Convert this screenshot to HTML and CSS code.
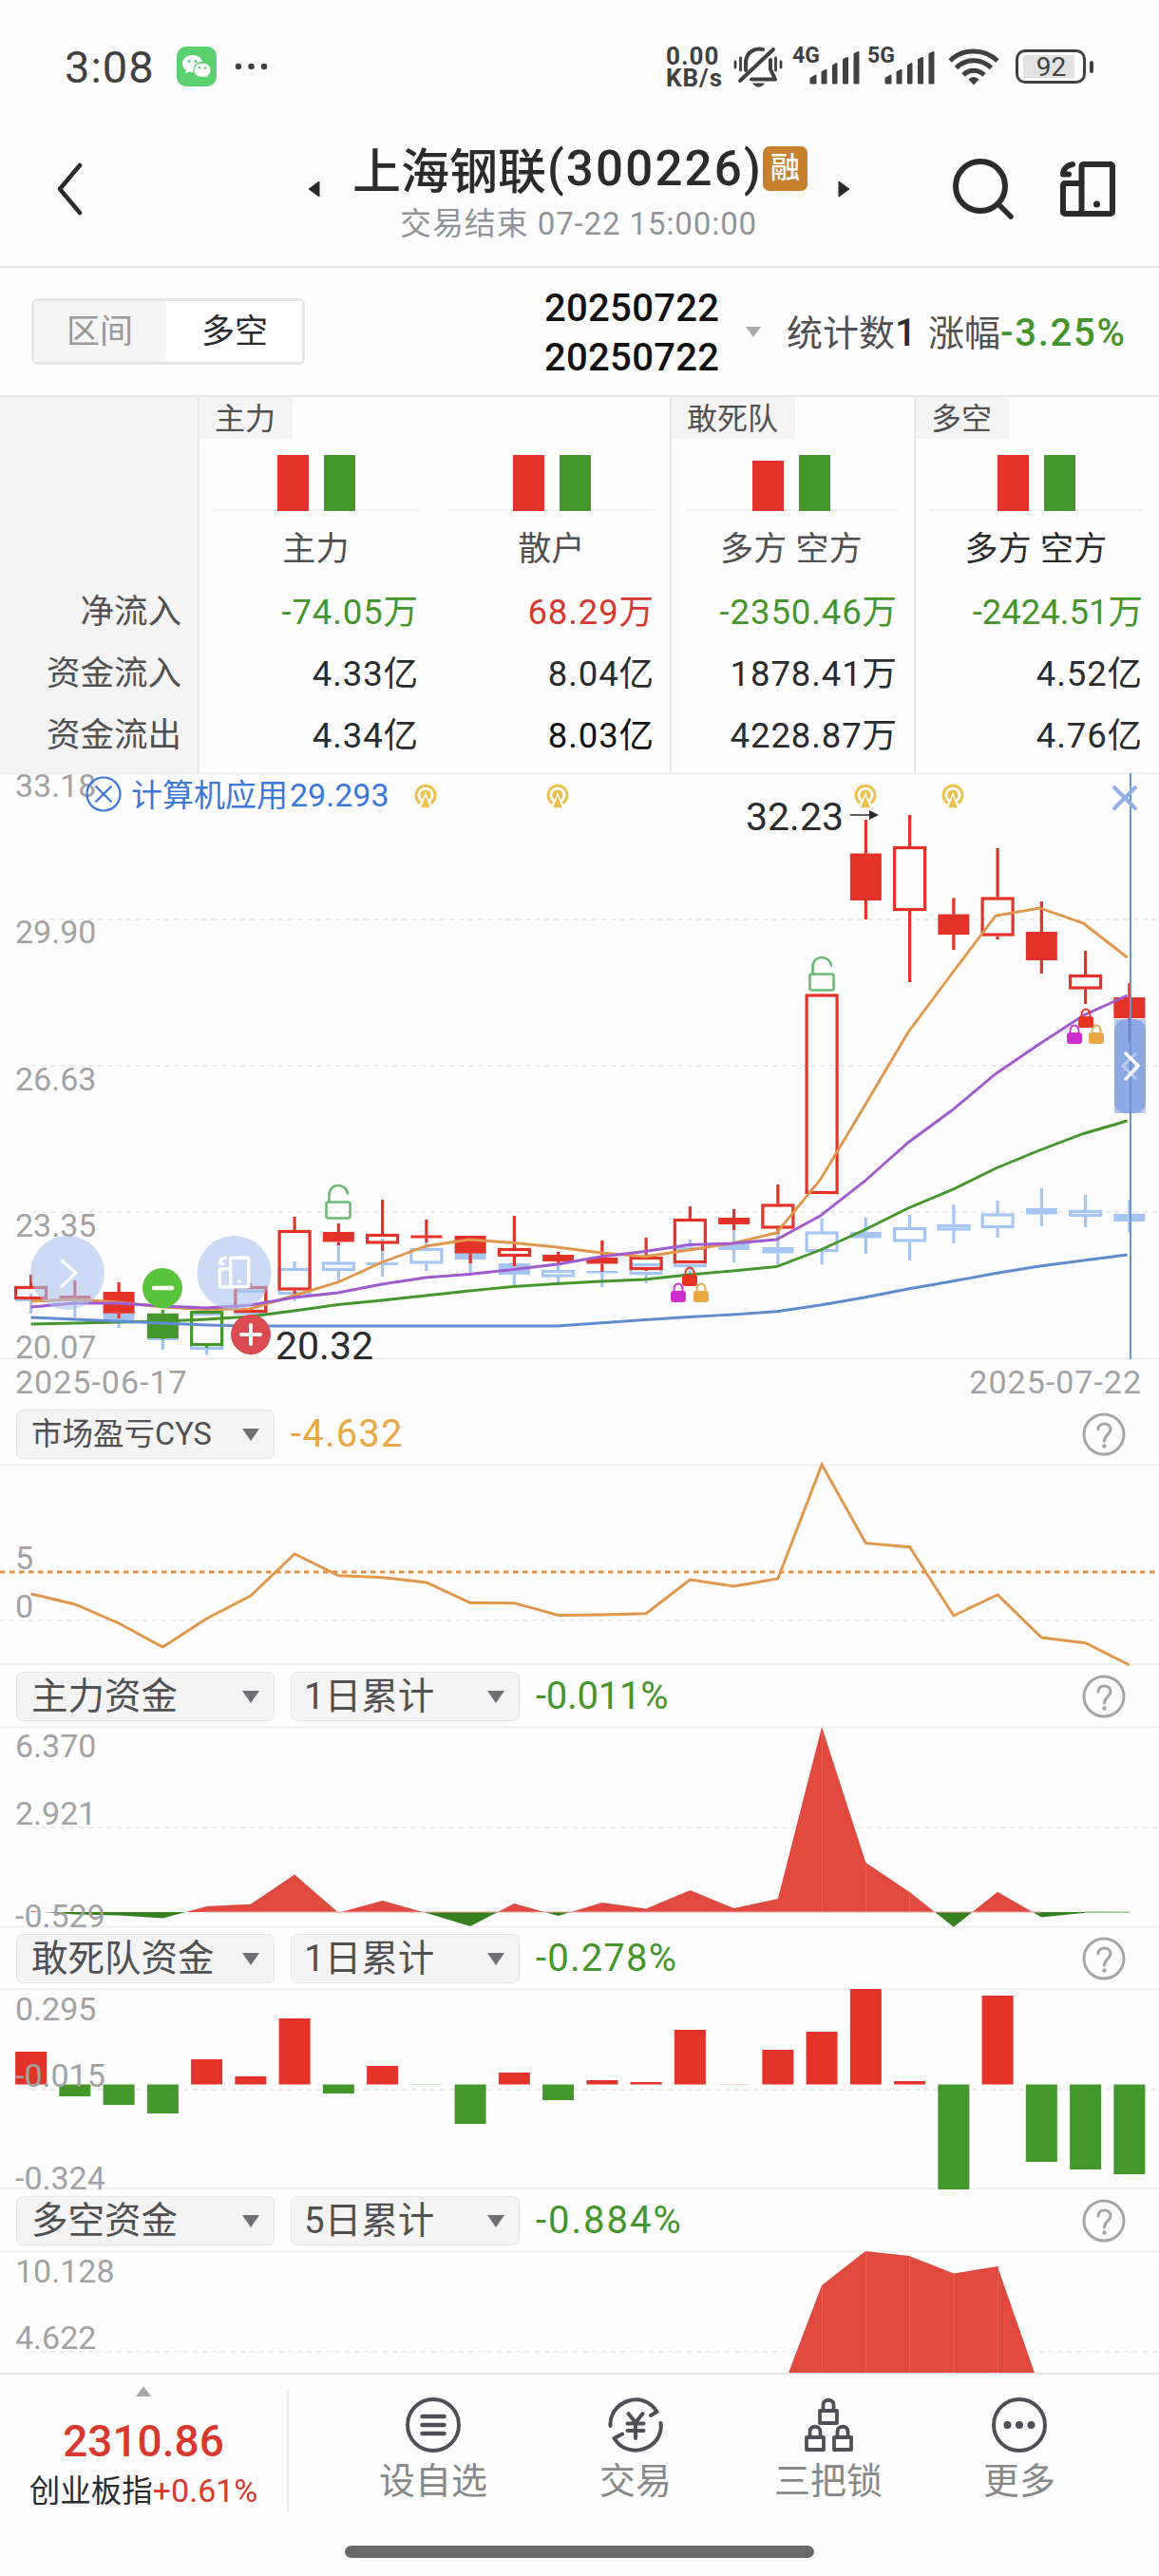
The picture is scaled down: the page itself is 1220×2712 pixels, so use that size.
FILE: index.html
```
<!DOCTYPE html>
<html lang="zh-CN">
<head>
  <meta charset="UTF-8" />
  <meta name="viewport" content="width=device-width, initial-scale=1.0" />
  <title>上海钢联(300226)</title>
  <link rel="stylesheet" href="styles.css">
</head>
<body>
  <!-- shared shapes -->
  <svg class="defs" width="0" height="0">
    <defs>
      <symbol id="switch" viewBox="0 0 60 60">
        <g fill="none" stroke="currentColor" stroke-width="6" stroke-linejoin="round" stroke-linecap="round">
          <rect x="23.5" y="4" width="32.5" height="52" rx="2" />
          <path d="M23.5 24H6a2 2 0 0 0-2 2v28a2 2 0 0 0 2 2h17.500" />
          <path d="M14 4C8 5 4 9 4 14.500h6" />
        </g>
        <circle cx="39.500" cy="46" r="3.500" fill="currentColor" />
      </symbol>
      <symbol id="antenna" viewBox="0 0 24 26">
        <path d="M6.500 20.500A10 10 0 1 1 17.500 20.500" fill="none" stroke="#ecc14e" stroke-width="3" />
        <circle cx="12" cy="12" r="5.600" fill="#ecc14e" />
        <path d="M12 11L18 26H6Z" fill="#ecc14e" stroke="#fff" stroke-width="1.500" />
      </symbol>
      <symbol id="openlock" viewBox="0 0 28 38">
        <g fill="none" stroke="#6abb73" stroke-width="2.600" stroke-linecap="round">
          <rect x="1.500" y="19.500" width="25" height="17" rx="2" />
          <path d="M4.500 19.500V12C4.500-1 22-1 24 10.500" />
        </g>
      </symbol>
      <symbol id="lock" viewBox="0 0 16 21">
        <path d="M3.500 11V7a4.500 5.500 0 0 1 9 0v4" fill="none" stroke="currentColor" stroke-width="1.800" />
        <rect x="0" y="9" width="16" height="12" rx="3" fill="currentColor" />
      </symbol>
      <symbol id="signal" viewBox="0 0 54 36">
        <path d="M1.500 34.500v-5l5-3v8zM13.500 34.500V23l4-2v13.500zM25 34.500V16l3.500-2v20.500zM36 34.500V10l4-2v26.500zM47.500 34.500V4l4-2v32.500z" fill="#404040" stroke="#404040" stroke-width="2" stroke-linejoin="round" />
      </symbol>
      <symbol id="help" viewBox="0 0 46 46">
        <circle cx="23" cy="23" r="21" fill="none" stroke="#a6a6a6" stroke-width="3" />
        <path d="M17 18c0-8 13-8 13 0 0 5-6.500 5.500-6.500 12" fill="none" stroke="#a6a6a6" stroke-width="3" stroke-linecap="round" />
        <circle cx="23.500" cy="35.500" r="2.200" fill="#a6a6a6" />
      </symbol>
    </defs>
  </svg>

  <div class="status-bar">
    <span class="clock">3:08</span>
    <svg class="wechat" viewBox="0 0 42 42">
      <rect width="42" height="42" rx="10" fill="#5ad06f" />
      <path d="M16.500 9C10.500 9 6 13 6 18c0 3 1.500 5 4 7l-1 3.500 4-2c1.500.5 3 .7 5 .5C16 20 22 15.500 27 16c-1-4.500-5.500-7-10.500-7z" fill="#fff" />
      <path d="M27 17c-5 0-9 3.500-9 8s4 7.500 9 7.500c1 0 2.200-.2 3.200-.5l3 1.700-.8-2.800C34.600 29.500 36 27.500 36 25c0-4.500-4-8-9-8z" fill="#fff" stroke="#5ad06f" />
      <g fill="#5ad06f"><circle cx="13" cy="15.500" r="1.500" /><circle cx="20" cy="15.500" r="1.500" /><circle cx="24" cy="22.500" r="1.300" /><circle cx="30" cy="22.500" r="1.300" /></g>
    </svg>
    <svg class="dots" viewBox="0 0 36 8"><g fill="#404040"><circle cx="4" cy="4" r="3.200" /><circle cx="17.500" cy="4" r="3.200" /><circle cx="31" cy="4" r="3.200" /></g></svg>
    <div class="speed">0.00<br>KB/s</div>
    <svg class="mute" viewBox="0 0 52 46">
      <g fill="none" stroke="#404040" stroke-width="4" stroke-linecap="round" stroke-linejoin="round">
        <path d="M7 37L42 4" />
        <path d="M13 26V17C14 7 22 2 31 4" />
        <path d="M39 15v10l5 10.500H19" />
        <path d="M2 17v6M7.500 13v13M44.500 13v13M50 17v6" stroke-width="2.800" />
      </g>
      <path d="M20 39.500h13c-3 5.500-10 5.500-13 0z" fill="#404040" />
    </svg>
    <span class="net">4G</span><svg class="signal"><use href="#signal" /></svg>
    <span class="net second">5G</span><svg class="signal"><use href="#signal" /></svg>
    <svg class="wifi" viewBox="0 0 54 40">
      <g fill="none" stroke="#404040" stroke-width="5">
        <path d="M2 14C16 .5 38 .5 52 14" /><path d="M8.500 21.500C19 11 35 11 45.500 21.500" /><path d="M16 29C22 22.500 32 22.500 38 29" />
      </g>
      <path d="M21.500 33.500c3.500-3.500 7.500-3.500 11 0L27 39.500z" fill="#404040" />
    </svg>
    <div class="battery"><span>92</span></div>
  </div>

  <div class="header">
    <svg class="back" viewBox="0 0 28 56"><path d="M25 3L4 28l21 25" fill="none" stroke="#2a2b2d" stroke-width="4.500" stroke-linecap="round" stroke-linejoin="round" /></svg>
    <svg class="prev" viewBox="0 0 13 18"><path d="M12 1v16L1 9z" fill="#2a2b2d" stroke="#2a2b2d" stroke-linejoin="round" /></svg>
    <div class="title">
      <h1>上海钢联<span>(300226)</span><i>融</i></h1>
      <p>交易结束 07-22 15:00:00</p>
    </div>
    <svg class="next" viewBox="0 0 13 18"><path d="M1 1v16l11-8z" fill="#2a2b2d" stroke="#2a2b2d" stroke-linejoin="round" /></svg>
    <svg class="search" viewBox="0 0 66 66"><g fill="none" stroke="#2a2b2d" stroke-width="6" stroke-linecap="round"><circle cx="30" cy="30" r="26" /><path d="M49 49l13 13" stroke-width="5.500" /></g></svg>
    <svg class="switch"><use href="#switch" /></svg>
  </div>

  <div class="toolbar">
    <div class="tabs"><span>区间</span><span class="active">多空</span></div>
    <div class="range">20250722<br>20250722</div>
    <i class="caret small"></i>
    <div class="stat">统计数<b>1</b></div>
    <div class="stat rise">涨幅<em>-3.25%</em></div>
  </div>

  <div class="funds">
    <div class="labels"><span>净流入</span><span>资金流入</span><span>资金流出</span></div>
    <div class="group main">
      <h3>主力</h3>
      <div class="col">
        <div class="bars"><i class="up"></i><i class="down"></i></div>
        <h4>主力</h4>
        <span class="green">-74.05万</span><span>4.33亿</span><span>4.34亿</span>
      </div>
      <div class="col">
        <div class="bars"><i class="up"></i><i class="down"></i></div>
        <h4>散户</h4>
        <span class="red">68.29万</span><span>8.04亿</span><span class="black">8.03亿</span>
      </div>
    </div>
    <div class="group">
      <h3>敢死队</h3>
      <div class="col">
        <div class="bars"><i class="up short"></i><i class="down"></i></div>
        <h4>多方 空方</h4>
        <span class="green">-2350.46万</span><span>1878.41万</span><span>4228.87万</span>
      </div>
    </div>
    <div class="group">
      <h3>多空</h3>
      <div class="col">
        <div class="bars"><i class="up"></i><i class="down"></i></div>
        <h4 class="dark">多方 空方</h4>
        <span class="green light">-2424.51万</span><span>4.52亿</span><span>4.76亿</span>
      </div>
    </div>
  </div>

  <svg class="kline" viewBox="0 814 1220 617">
    <g class="grid">
      <path class="edge" d="M0 814.500H1220M0 1430.500H1220" />
      <path d="M33 968H1220M33 1122H1220M33 1276H1220" />
    </g>
    <g class="axis">
      <text x="16" y="839">33.18</text><text x="16" y="993">29.90</text><text x="16" y="1148">26.63</text><text x="16" y="1302">23.35</text><text x="16" y="1430">20.07</text>
    </g>
    <g id="sectorCandles"></g>
    <g id="candles"></g>
    <g id="averages"></g>

    <g fill="none" stroke="#3a78dc" stroke-width="2.200"><circle cx="109" cy="836" r="17.500" /><path d="M100.500 827.500l17 17M117.500 827.500l-17 17" /></g>
    <text class="sector" x="138" y="849">计算机应用<tspan x="305" class="num">29.293</tspan></text>
    <use href="#antenna" x="436" y="825" width="24" height="26" /><use href="#antenna" x="575" y="825" width="24" height="26" />
    <use href="#antenna" x="899" y="825" width="24" height="26" /><use href="#antenna" x="991" y="825" width="24" height="26" />
    <text class="mark" x="785" y="874">32.23</text>
    <path d="M895 858h22" stroke="#2a2b2d" stroke-width="1.500" /><path d="M915 853l10 5-10 5z" fill="#2a2b2d" />
    <text class="mark" x="290" y="1431">20.32</text>
    <use href="#openlock" x="342" y="1246" width="28" height="38" /><use href="#openlock" x="851" y="1006" width="28" height="38" />

    <g id="locks">
      <use href="#lock" x="718" y="1333" width="16" height="21" color="#ea3323" /><use href="#lock" x="706" y="1350" width="16" height="21" color="#cc2fcf" /><use href="#lock" x="730" y="1350" width="16" height="21" color="#eba743" />
      <use href="#lock" x="1135" y="1061" width="16" height="21" color="#ea3323" /><use href="#lock" x="1123" y="1078" width="16" height="21" color="#cc2fcf" /><use href="#lock" x="1146" y="1078" width="16" height="21" color="#eba743" />
    </g>

    <g fill="#a9c0ee" fill-opacity=".58"><circle cx="71" cy="1340" r="39" /><circle cx="246.500" cy="1340" r="39" /></g>
    <path d="M65 1327l15 13-15 14" fill="none" stroke="#fff" stroke-width="3" stroke-linecap="round" />
    <use href="#switch" x="229" y="1322" width="35" height="35" color="#fff" />
    <circle cx="171" cy="1356" r="21" fill="#59c43b" /><path d="M162 1356h19" stroke="#fff" stroke-width="4.500" stroke-linecap="round" />
    <circle cx="264" cy="1405" r="21" fill="#da4b50" /><path d="M254 1405h20M264 1395v20" stroke="#fff" stroke-width="4" stroke-linecap="round" />

    <rect x="1173" y="1073" width="33" height="99" fill="#8aa9e5" fill-opacity=".6" /><rect x="1173" y="1073" width="33" height="99" rx="12" fill="#8aa9e5" />
    <path d="M1189.300 1071v27" stroke="#6b7cc8" stroke-width="3" />
    <path d="M1190 814V1431" stroke="#6794cf" stroke-width="2" />
    <path d="M1196 1109l-14 13 14 14" fill="none" stroke="#b9cdf0" stroke-width="3" />
    <path d="M1185 1109l13 13-13 14" fill="none" stroke="#fff" stroke-width="3.500" stroke-linecap="round" />
    <path d="M1173 829l22 22M1195 829l-22 22" stroke="#8fafe6" stroke-width="4" stroke-linecap="round" />
  </svg>
  <div class="dates"><span>2025-06-17</span><span>2025-07-22</span></div>

  <div class="indicator">
    <div class="select small-text">市场盈亏CYS<i class="caret"></i></div>
    <span class="value orange">-4.632</span>
    <svg class="help"><use href="#help" /></svg>
  </div>
  <svg class="panel" viewBox="0 1542 1220 211">
    <g class="grid"><path class="edge" d="M0 1542.500H1220M0 1752.500H1220" /><path d="M0 1706H1220" /></g>
    <path d="M0 1655H1220" stroke="#dd9344" stroke-width="3" stroke-dasharray="5.500 4.500" />
    <g class="axis"><text x="16" y="1652">5</text><text x="16" y="1703">0</text></g>
    <g id="cys"></g>
  </svg>

  <div class="indicator">
    <div class="select">主力资金<i class="caret"></i></div>
    <div class="select period">1日累计<i class="caret"></i></div>
    <span class="value narrow">-0.011%</span>
    <svg class="help"><use href="#help" /></svg>
  </div>
  <svg class="panel" viewBox="0 1818 1220 211">
    <clipPath id="above"><rect x="0" y="1818" width="1220" height="195" /></clipPath>
    <clipPath id="below"><rect x="0" y="2013" width="1220" height="16" /></clipPath>
    <g class="grid"><path class="edge" d="M0 1818.500H1220M0 2028.500H1220" /><path d="M33 1924H1220" /></g>
    <g id="mainForce"></g>
    <g class="axis"><text x="16" y="1850">6.370</text><text x="16" y="1921">2.921</text><text x="16" y="2029">-0.529</text></g>
  </svg>

  <div class="indicator">
    <div class="select">敢死队资金<i class="caret"></i></div>
    <div class="select period">1日累计<i class="caret"></i></div>
    <span class="value">-0.278%</span>
    <svg class="help"><use href="#help" /></svg>
  </div>
  <svg class="panel" viewBox="0 2094 1220 211">
    <g class="grid"><path class="edge" d="M0 2094.500H1220M0 2304.500H1220" /><path d="M33 2200H1220" /></g>
    <g id="squad"></g>
    <g class="axis"><text x="16" y="2127">0.295</text><text x="16" y="2197">-0.015</text><text x="16" y="2305">-0.324</text></g>
  </svg>

  <div class="indicator">
    <div class="select">多空资金<i class="caret"></i></div>
    <div class="select period">5日累计<i class="caret"></i></div>
    <span class="value wide">-0.884%</span>
    <svg class="help"><use href="#help" /></svg>
  </div>
  <svg class="panel last" viewBox="0 2370 1220 128">
    <g class="grid"><path class="edge" d="M0 2370.500H1220" /><path d="M33 2476H1220" /></g>
    <path d="M830 2498L865 2406 911 2370 957 2375 1004 2393.500 1050 2386 1089 2498z" fill="#e04a3e" />
    <path d="M865.500 2406V2498M911.500 2370V2498M957.500 2375V2498M1004 2394V2498M1050.500 2386V2498" stroke="#e66157" />
    <g class="axis"><text x="16" y="2403">10.128</text><text x="16" y="2473">4.622</text></g>
  </svg>

  <div class="footer">
    <div class="index">
      <i class="arrow-up"></i>
      <strong>2310.86</strong>
      <p>创业板指<em>+0.61%</em></p>
    </div>
    <div class="nav n1">
      <svg viewBox="0 0 60 60"><g fill="none" stroke="#4f5056" stroke-width="4" stroke-linecap="round"><circle cx="30" cy="30" r="27" /><path d="M18.500 21h23M18.500 30h23M18.500 39h23" stroke-width="4.500" /></g></svg>
      设自选
    </div>
    <div class="nav n2">
      <svg viewBox="0 0 60 60"><g fill="none" stroke="#4f5056" stroke-width="4" stroke-linecap="round" stroke-linejoin="round">
        <path d="M3.500 31C2 5 38-8 52.500 16l-6.500 4" /><path d="M56.500 28C60 55 22 68 7.500 44L16 39.500" />
        <path d="M22.500 18l7.500 9.500L37.500 18M30 27.500V44M21.500 28.500h17M21.500 36h17" />
      </g></svg>
      交易
    </div>
    <div class="nav n3">
      <svg viewBox="0 0 60 60"><g fill="none" stroke="#4f5056" stroke-width="3.800" stroke-linejoin="round">
        <path d="M21 15h18v13H21zM24.500 15V9c0-7 11-7 11 0v6M7 43h18v13H7zM10.500 43v-6c0-7 11-7 11 0v6M36 43h18v13H36zM39.500 43v-6c0-7 11-7 11 0v6" />
      </g></svg>
      三把锁
    </div>
    <div class="nav n4">
      <svg viewBox="0 0 60 60"><circle cx="30" cy="30" r="27" fill="none" stroke="#4f5056" stroke-width="4" /><g fill="#4f5056"><circle cx="17.500" cy="30" r="4" /><circle cx="30" cy="30" r="4" /><circle cx="42.500" cy="30" r="4" /></g></svg>
      更多
    </div>
  </div>
  <div class="home-bar"></div>

  <script src="script.js"></script>
</body>
</html>
```
FILE: styles.css
```
* {
  margin: 0;
  padding: 0;
  box-sizing: border-box;
}

body {
  width: 1220px;
  height: 2712px;
  overflow: hidden;
  background: #fefefe;
  color: #2a2b2d;
  font-family: Roboto, 'Noto Sans CJK SC', sans-serif;
}

svg {
  display: block;
  flex-shrink: 0;
}

i, em {
  font-style: normal;
}

.defs {
  position: absolute;
}

/* status bar */
.status-bar {
  height: 140px;
  padding-left: 68px;
  display: flex;
  align-items: center;
  color: #404040;
}

.clock {
  width: 118px;
  font-size: 47px;
  letter-spacing: 1px;
}

.wechat {
  width: 42px;
  height: 42px;
}

.dots {
  width: 36px;
  height: 8px;
  margin-left: 19px;
}

.speed {
  width: 71px;
  margin: 2px 0 0 418px;
  font-size: 26px;
  line-height: 23px;
  font-weight: 700;
  letter-spacing: 1px;
}

.mute {
  width: 52px;
  height: 46px;
  margin-top: 2px;
}

.net {
  width: 18px;
  margin: -24px 0 0 10px;
  font-size: 23px;
  font-weight: 700;
}

.net.second {
  margin-left: 7px;
}

.signal {
  width: 54px;
  height: 36px;
  margin-top: 1px;
}

.wifi {
  width: 54px;
  height: 40px;
  margin-left: 13px;
}

.battery {
  position: relative;
  width: 74px;
  height: 36px;
  margin-left: 17px;
  padding: 3px 9px 3px 5px;
  border: 3px solid #404040;
  border-radius: 10px;
}

.battery::after {
  content: '';
  position: absolute;
  right: -11px;
  top: 9px;
  width: 4px;
  height: 13px;
  border-radius: 2px;
  background: #404040;
}

.battery span {
  display: block;
  height: 24px;
  background: #e2e2e2;
  font-size: 28px;
  line-height: 25px;
  text-align: center;
  padding-left: 5px;
}

/* header */
.header {
  height: 142px;
  border-bottom: 2px solid #e6e6e6;
  display: flex;
  align-items: flex-start;
}

.back {
  width: 28px;
  height: 56px;
  margin: 31px 0 0 59px;
}

.prev {
  width: 13px;
  height: 18px;
  margin: 50px 0 0 237px;
}

.title {
  width: 545px;
  padding-left: 34px;
}

.title h1 {
  display: flex;
  align-items: center;
  height: 74px;
  font-size: 51px;
  font-weight: 500;
  white-space: nowrap;
}

.title h1 span {
  width: 228px;
  padding-left: 1px;
  letter-spacing: 2.2px;
}

.title h1 i {
  width: 47px;
  height: 47px;
  border-radius: 7px;
  background: #c8802c;
  color: #fff;
  font-size: 31px;
  line-height: 45px;
  text-align: center;
}

.title p {
  margin: 1px 0 0 50px;
  font-size: 33px;
  line-height: 42px;
  color: #929396;
  letter-spacing: 0.9px;
}

.next {
  width: 13px;
  height: 18px;
  margin-top: 50px;
}

.search {
  width: 66px;
  height: 66px;
  margin: 26px 0 0 107px;
}

.switch {
  width: 60px;
  height: 60px;
  margin: 29px 0 0 47px;
  color: #2a2b2d;
}

/* toolbar */
.toolbar {
  height: 136px;
  padding-left: 33px;
  border-bottom: 2px solid #e6e6e6;
  display: flex;
  align-items: center;
}

.tabs {
  width: 288px;
  height: 70px;
  display: flex;
  border: 3px solid #e5e5e7;
  border-radius: 7px;
  font-size: 35px;
  line-height: 65px;
  text-align: center;
}

.tabs span {
  width: 138px;
  height: 64px;
  background: #f5f5f5;
  color: #98989a;
}

.tabs .active {
  width: 144px;
  padding-left: 2px;
  background: #fff;
  color: #2a2b2d;
}

.range {
  width: 212px;
  margin: 3px 0 0 252px;
  font-size: 40px;
  line-height: 52px;
  font-weight: 500;
  letter-spacing: 0.3px;
  color: #111;
  white-space: nowrap;
}

.caret {
  border: 9px solid transparent;
  border-top: 13px solid #6f7073;
  border-bottom: 0;
}

.caret.small {
  border-width: 11px 8px 0;
  border-top-color: #ababad;
}

.stat {
  width: 150px;
  margin: -3px 0 0 27px;
  font-size: 38px;
  color: #505052;
  white-space: nowrap;
}

.stat b {
  font-weight: 500;
  color: #2a2b2d;
  font-size: 40px;
}

.stat.rise {
  margin-left: -1px;
}

.stat em {
  font-size: 40px;
  font-weight: 500;
  letter-spacing: 1.7px;
  color: #44962c;
}

/* fund flow table */
.funds {
  height: 396px;
  display: grid;
  grid-template-columns: 208px 497px 257px 258px;
}

.labels {
  display: flex;
  flex-direction: column;
  padding: 194px 17px 0 0;
  background: #f4f4f4;
  color: #505052;
  font-size: 35.5px;
  line-height: 65px;
  text-align: right;
}

.group {
  border-left: 2px solid #e8e8e8;
}

.group.main {
  display: grid;
  grid-template-columns: 248px 248px;
  grid-template-rows: 44px auto;
}

.group.main h3 {
  grid-column: span 2;
}

.group h3 {
  width: fit-content;
  height: 44px;
  padding: 0 18px 0 16px;
  background: #f4f4f4;
  color: #505052;
  font-size: 32px;
  font-weight: 400;
  line-height: 46px;
}

.col {
  display: flex;
  flex-direction: column;
  padding: 0 17px 0 14px;
  font-size: 36.5px;
  line-height: 65px;
  letter-spacing: 0.9px;
  text-align: right;
  white-space: nowrap;
}

.bars {
  height: 76px;
  display: flex;
  align-items: flex-end;
  justify-content: center;
  gap: 16px;
  border-bottom: 2px solid #f1f1f1;
}

.bars i {
  width: 33px;
  height: 59px;
  margin-bottom: -2px;
}

.bars .up {
  background: #e33228;
}

.bars .short {
  height: 53px;
}

.bars .down {
  background: #44972b;
}

.col h4 {
  height: 74px;
  color: #505052;
  font-size: 35px;
  font-weight: 400;
  line-height: 82px;
  letter-spacing: 0.3px;
  text-align: center;
}

.col h4.dark {
  color: #2a2b2d;
}

.col .black {
  color: #111;
}

.col .light {
  letter-spacing: 0;
}

.green {
  color: #44962c;
}

.red {
  color: #d8392f;
}

/* charts */
.kline {
  width: 1220px;
  height: 617px;
  overflow: visible;
}

.panel {
  width: 1220px;
  height: 211px;
  overflow: visible;
}

.panel.last {
  height: 128px;
}

.grid path {
  stroke: #ececec;
  stroke-width: 2;
  stroke-dasharray: 5 5;
}

.grid .edge {
  stroke: #efefef;
  stroke-dasharray: none;
}

.axis text {
  font-size: 34px;
  fill: #a2a2a4;
}

.sector {
  font-size: 33px;
  fill: #3a78dc;
}

.sector .num {
  font-size: 34px;
}

.mark {
  font-size: 41px;
  fill: #2a2b2d;
}

.dates {
  height: 46px;
  padding: 0 18px 0 16px;
  display: flex;
  justify-content: space-between;
  font-size: 34px;
  line-height: 48px;
  letter-spacing: 1px;
  color: #a2a2a4;
}

.indicator {
  height: 65px;
  padding: 0 35px 0 17px;
  display: flex;
  align-items: center;
}

.select {
  width: 272px;
  height: 52px;
  margin: 1px 17px 0 0;
  padding: 0 15px 0 15px;
  display: flex;
  align-items: center;
  justify-content: space-between;
  border: 1.5px solid #e5e5e5;
  border-radius: 7px;
  background: #f4f4f4;
  color: #505052;
  font-size: 38.5px;
  line-height: 50px;
}

.small-text {
  font-size: 32.5px;
}

.period {
  width: 241px;
  padding-left: 13px;
}

.value {
  font-size: 40px;
  letter-spacing: 1.2px;
  color: #44962c;
}

.value.narrow {
  letter-spacing: -0.2px;
}

.value.wide {
  letter-spacing: 2px;
}

.orange {
  color: #eba743;
}

.help {
  width: 46px;
  height: 46px;
  margin-left: auto;
}

/* bottom bar */
.footer {
  height: 182px;
  border-top: 2px solid #e6e6e6;
  display: flex;
  align-items: flex-start;
}

.index {
  width: 304px;
  height: 129px;
  margin-top: 16px;
  display: flex;
  flex-direction: column;
  align-items: center;
  border-right: 2px solid #e8e8e8;
}

.arrow-up {
  margin-top: -4px;
  border: 8px solid transparent;
  border-top: 0;
  border-bottom: 11px solid #a9a9ab;
}

.index strong {
  margin-top: 19px;
  font-size: 46px;
  line-height: 56px;
  font-weight: 500;
  color: #d8392f;
}

.index p {
  font-size: 32.5px;
  line-height: 48px;
}

.index em {
  color: #d8392f;
  font-size: 34px;
}

.nav {
  width: 140px;
  margin-top: 23px;
  font-size: 38px;
  line-height: 58px;
  color: #87888a;
  text-align: center;
}

.nav svg {
  width: 60px;
  height: 60px;
  margin: 0 auto;
}

.n1 {
  margin-left: 82px;
}

.n2 {
  margin-left: 73px;
}

.n3 {
  margin-left: 63px;
}

.n4 {
  margin-left: 61px;
}

.home-bar {
  width: 494px;
  height: 13px;
  margin: 0 auto;
  border-radius: 7px;
  background: #696969;
}
```
FILE: script.js
```
const RED = '#e33228';
const GREEN = '#44972b';
const PALE = '#a5c6f4';

// x of the n-th trading day
const dayX = i => 32.6 + i * 46.25;
const lineX = i => 32.6 + i * 46.16;

// [filled, wick top, body top, body bottom, wick bottom, color]
const candles = [
  [0, 1342, 1354, 1368, 1368], [1, 1348, 1364, 1367, 1367], [1, 1350, 1360, 1382.7, 1388],
  [1, 1379, 1382.7, 1409, 1410, GREEN], [0, 1380, 1380, 1417, 1419, GREEN], [0, 1351, 1354, 1382, 1382],
  [0, 1281, 1295, 1358.5, 1362], [1, 1288, 1297, 1307.5, 1311], [0, 1263, 1299, 1309.5, 1317],
  [1, 1284, 1300.5, 1303.5, 1308], [1, 1301, 1301, 1319.5, 1330], [0, 1280, 1314, 1323, 1333],
  [1, 1318, 1321, 1328, 1332], [1, 1306, 1324, 1330.5, 1339], [0, 1303, 1323, 1337, 1338],
  [0, 1270, 1283, 1330, 1330], [1, 1273, 1282, 1289, 1295], [0, 1247, 1267.5, 1293.5, 1299],
  [0, 1047, 1046.5, 1257, 1257], [1, 863, 898.5, 948, 968], [0, 858, 891, 959, 1034],
  [1, 945.5, 962.5, 984, 1000], [0, 893, 944.5, 985.5, 989], [1, 949, 981, 1011, 1025],
  [0, 1001, 1026, 1041.5, 1057], [1, 1035, 1050, 1072, 1073]
];

const sector = [
  [1, 1362, 1366, 1370, 1383], [1, 1366, 1366, 1367, 1387], [1, 1380, 1380, 1390, 1398],
  [1, 1400, 1400, 1411, 1421], [0, 1382, 1382, 1421, 1426], [0, 1358, 1358, 1384, 1384],
  [0, 1328, 1335, 1363, 1370], [0, 1311, 1328.5, 1338, 1349], [1, 1304, 1329, 1332, 1344],
  [0, 1308, 1314, 1330.5, 1338], [1, 1315, 1315, 1326, 1341], [1, 1330, 1330, 1342, 1354],
  [0, 1331, 1337, 1344.5, 1350], [1, 1338, 1338, 1340.5, 1355], [0, 1330, 1330, 1342, 1351],
  [0, 1305, 1313, 1334, 1342], [1, 1295, 1309, 1316, 1329], [1, 1299, 1313, 1319.5, 1331],
  [0, 1283, 1296.5, 1318, 1331], [1, 1282, 1297, 1303.5, 1320], [0, 1279, 1292, 1307.5, 1327],
  [0, 1268, 1289, 1295.5, 1309], [0, 1264, 1277.5, 1293, 1303], [1, 1251, 1272, 1278.5, 1291],
  [0, 1258, 1274, 1281, 1292], [1, 1263, 1278, 1286, 1298]
];

const averages = {
  '#44972b': [1394, 1393, 1392, 1391, 1389, 1386, 1380, 1373.5, 1369, 1364, 1359, 1354.5, 1351.5, 1349, 1347, 1342, 1338, 1333.5, 1316, 1295, 1272, 1252.7, 1230, 1211, 1193.5, 1180],
  '#5f8bd0': [1387, 1389, 1391, 1393, 1395, 1396, 1396, 1396, 1396, 1396, 1396, 1396, 1396, 1392.7, 1389.5, 1386.5, 1384, 1380.7, 1374, 1366, 1357, 1349, 1340.5, 1333, 1327, 1321],
  '#e2964a': [1370, 1368, 1371, 1376, 1378.5, 1378, 1364, 1350, 1329, 1312, 1305, 1308.5, 1313, 1319, 1323, 1316, 1309, 1298, 1242, 1165, 1087, 1025, 964, 956, 972, 1008],
  '#a15bd0': [1376, 1372, 1372, 1375, 1377, 1374, 1366, 1361, 1352, 1345, 1341.5, 1336.5, 1331, 1323, 1317.5, 1310.5, 1309, 1305, 1280, 1244, 1203, 1169, 1130.5, 1099, 1069, 1048]
};

const cys = [1678, 1689, 1709, 1734, 1704, 1680, 1636, 1658.7, 1660.7, 1666, 1687.5, 1687.7, 1700.5, 1700, 1698.7, 1663, 1670, 1662, 1542, 1624.7, 1628.7, 1701, 1679, 1724, 1729.7, 1753];

const mainForce = [2012, 2015.5, 2016.5, 2019.5, 2007, 2004.7, 1973.5, 2013.7, 2001, 2014, 2028, 2004, 2017, 2003, 2009.5, 1990, 2009, 1999, 1818, 1961, 1992, 2028.7, 1991.7, 2018.5, 2013.8, 2013.5];

const squad = [2160, 2207, 2216, 2225, 2168, 2186, 2125, 2204, 2175, 2195, 2236, 2182, 2211, 2190, 2192, 2137, 2194, 2158, 2139, 2094, 2191, 2305, 2101, 2276, 2284, 2289];

function drawCandles(id, data, base) {
  document.getElementById(id).innerHTML = data.map(([filled, top, open, close, bottom, color], i) => {
    const c = color || base;
    const x = dayX(i);
    const wick = `<path d="M${x} ${top}V${open}M${x} ${close}V${bottom}" stroke="${c}" stroke-width="3.2"/>`;
    const body = filled
      ? `<rect x="${x - 16.5}" y="${open}" width="33" height="${close - open}" fill="${c}"/>`
      : `<rect x="${x - 16}" y="${open + 1.5}" width="32" height="${close - open - 3}" fill="none" stroke="${c}" stroke-width="3.2"/>`;
    return wick + body;
  }).join('');
}

function polyline(data, color) {
  const points = data.map((y, i) => `${lineX(i)},${y}`).join(' ');
  return `<polyline points="${points}" fill="none" stroke="${color}" stroke-width="2.9"/>`;
}

drawCandles('sectorCandles', sector, PALE);
drawCandles('candles', candles, RED);

document.getElementById('averages').innerHTML =
  Object.entries(averages).map(([color, data]) => polyline(data, color)).join('');

document.getElementById('cys').innerHTML =
  `<polyline points="${cys.map((y, i) => `${dayX(i)},${y}`).join(' ')}" fill="none" stroke="#e2964a" stroke-width="2.9"/>`;

// area split at the zero line: red above, green below
const area = `M${dayX(0)} 2013L` + mainForce.map((y, i) => `${dayX(i)} ${y}`).join('L') + `L${dayX(25)} 2013Z`;
document.getElementById('mainForce').innerHTML =
  `<path d="${area}" fill="#e04a3e" clip-path="url(#above)"/>` +
  `<path d="${area}" fill="#35801f" clip-path="url(#below)"/>` +
  `<path d="M${dayX(4)} 2013H${dayX(23)}" stroke="#e9a79f"/>` +
  `<path d="M${dayX(24)} 2013H${dayX(25)}" stroke="#a5cf9c" stroke-width="1.500"/>` +
  `<path d="M865.500 1820V2012M911.500 1962V2012M957.500 1993V2012" stroke="#e66157"/>`;

document.getElementById('squad').innerHTML = squad.map((y, i) => {
  const zero = 2194.5;
  const h = Math.abs(y - zero);
  return `<rect x="${dayX(i) - 16.5}" y="${Math.min(y, zero)}" width="33" height="${h}" fill="${y < zero ? RED : GREEN}" fill-opacity="${h < 1 ? 0.4 : 1}"/>`;
}).join('');
```
